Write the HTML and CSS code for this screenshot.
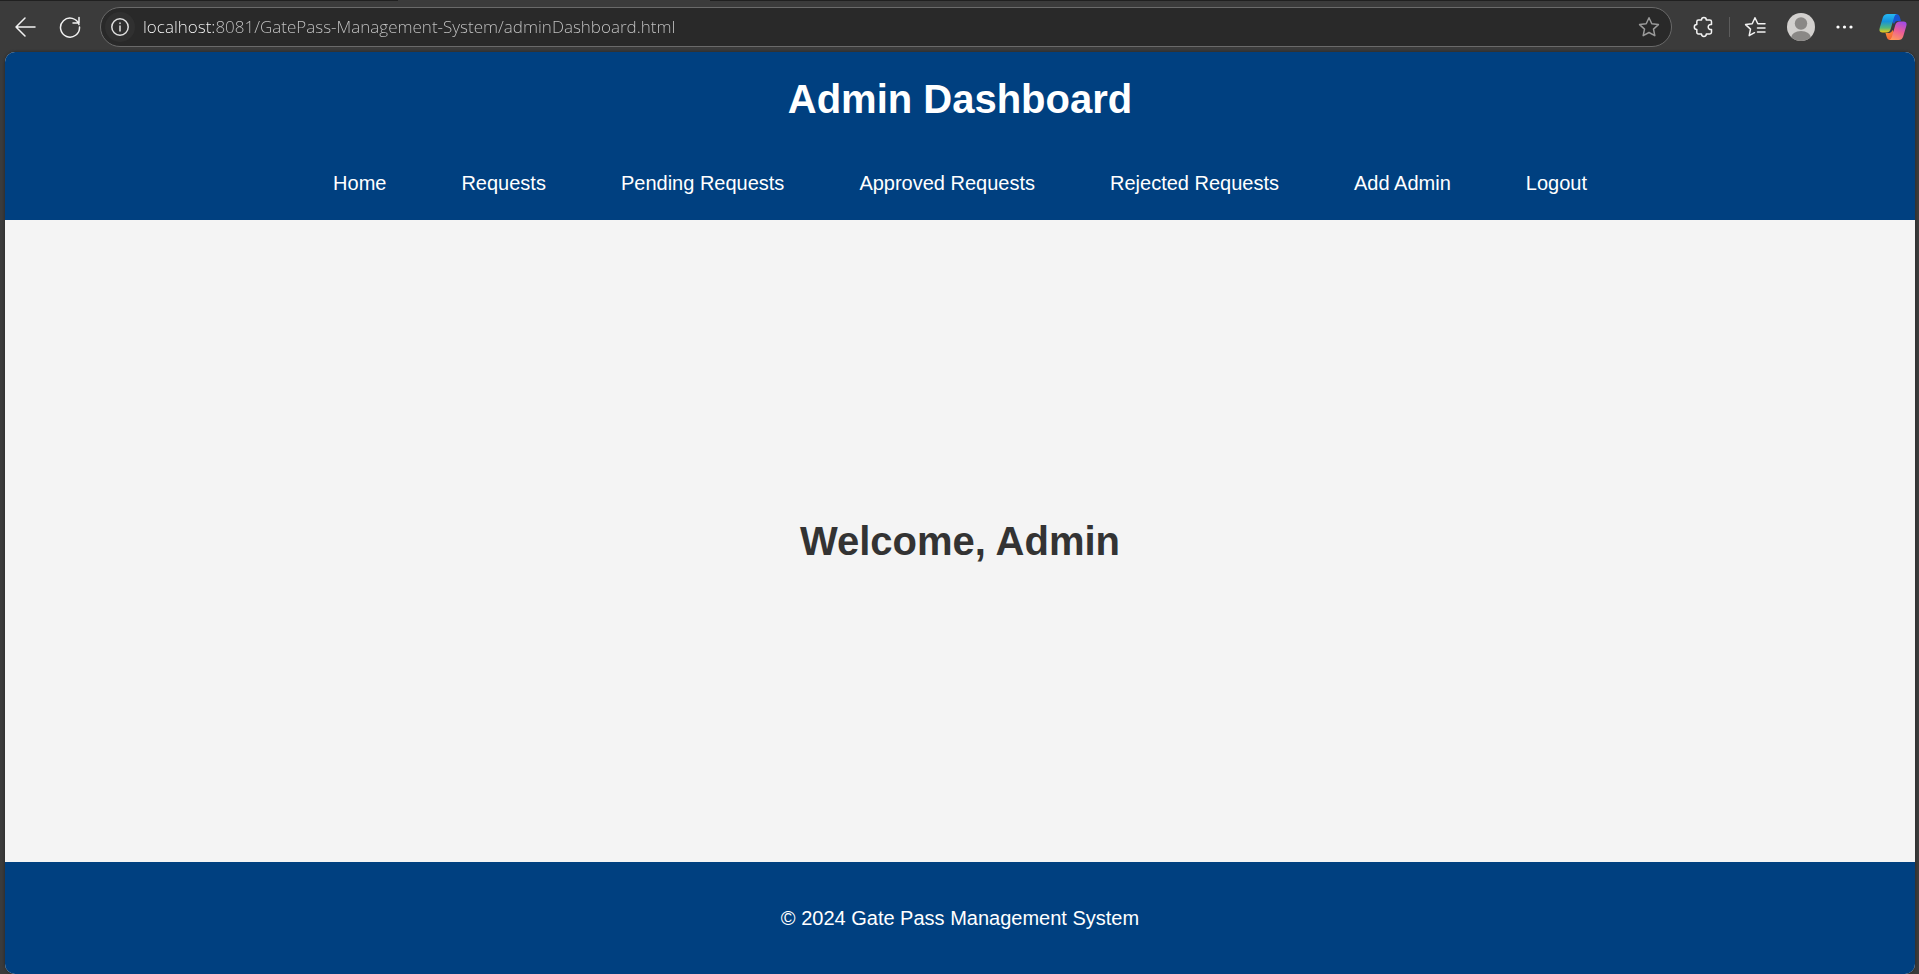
FILE: index.html
```html
<!DOCTYPE html>
<html lang="en">
<head>
<meta charset="utf-8">
<title>Admin Dashboard</title>
<link rel="stylesheet" href="styles.css">
</head>
<body class="window">
<div class="tab-strip"><span class="tab-edge tab-edge-left"></span><span class="tab-active"></span><span class="tab-edge tab-edge-right"></span></div>
<div class="toolbar">
  <button class="tool" aria-label="Back">
    <svg width="22" height="22" viewBox="0 0 22 22" class="line"><path d="M11 2 2 11l9 9M2 11h19"/></svg>
  </button>
  <button class="tool" aria-label="Refresh">
    <svg width="22" height="22" viewBox="0 0 22 22" class="line"><path d="M20 8.500A9.500 9.500 0 1 0 20.500 11M20 1.500v5.500h-6"/></svg>
  </button>
  <form class="address">
    <button type="button" class="site-info" aria-label="Site information">
      <svg width="18" height="18" viewBox="0 0 18 18" class="line info"><circle cx="9" cy="9" r="8.200"/><path d="M9 8v5M9 5v.600"/></svg>
    </button>
    <input class="url" type="text" aria-label="Address" value="localhost:8081/GatePass-Management-System/adminDashboard.html">
    <button type="button" class="star" aria-label="Add to favorites">
      <svg width="22" height="22" viewBox="0 0 22 22" class="line dim"><path d="m11 1.800 2.800 6 6.600.8-4.900 4.500 1.300 6.600L11 16.500l-5.800 3.200 1.300-6.600L1.600 8.600l6.600-.8z"/></svg>
    </button>
  </form>
  <div class="actions">
    <button class="tool" aria-label="Extensions">
      <svg width="22" height="22" viewBox="0 0 22 22" class="line"><path d="M5.500 4h3a2.400 2.400 0 0 1 4.800 0h3.500q1.700 0 1.700 1.700v2.800a2.600 2.600 0 1 0 0 5v2.800q0 1.700-1.700 1.700h-3.500a2.400 2.400 0 0 1-4.800 0h-3q-1.700 0-1.700-1.700v-2.800a2.500 2.500 0 0 1 0-5V5.700Q3.800 4 5.500 4z"/></svg>
    </button>
    <span class="divider"></span>
    <button class="tool" aria-label="Favorites">
      <svg width="22" height="22" viewBox="0 0 22 22" class="line"><path d="M21 7.800h-7.200L11 1.800l-2.800 6-6.600.8 4.900 4.500-1.300 6.600 5.300-3M13.500 12H21M13.500 16H21"/></svg>
    </button>
    <button class="tool" aria-label="Profile">
      <svg width="28" height="28" viewBox="0 0 28 28"><defs><clipPath id="face"><circle cx="14" cy="14" r="14"/></clipPath></defs><g clip-path="url(#face)"><path fill="#d2d0ce" d="M0 0h28v28H0z"/><circle cx="14" cy="10.500" r="6.200" fill="#8a8886"/><ellipse cx="14" cy="25" rx="10" ry="7" fill="#8a8886"/></g></svg>
    </button>
    <button class="tool" aria-label="Settings and more">
      <svg width="18" height="18" viewBox="0 0 18 18" fill="#fff"><circle cx="2" cy="9" r="1.600"/><circle cx="8.500" cy="9" r="1.600"/><circle cx="15" cy="9" r="1.600"/></svg>
    </button>
  </div>
  <button class="tool" aria-label="Copilot">
    <svg width="28" height="28" viewBox="0 0 28 28">
      <defs>
        <linearGradient id="cool" x1="0" y1="0" x2="0" y2="1"><stop offset="0" stop-color="#26b8f2"/><stop offset=".4" stop-color="#1591dc"/><stop offset=".75" stop-color="#53b77c"/><stop offset="1" stop-color="#f2cb13"/></linearGradient>
        <linearGradient id="warm" x1=".7" y1="0" x2=".3" y2="1"><stop offset="0" stop-color="#a34be5"/><stop offset=".5" stop-color="#ec5d96"/><stop offset="1" stop-color="#ff985b"/></linearGradient>
        <linearGradient id="fold" x1="0" y1="0" x2="1" y2="1"><stop offset="0" stop-color="#ff9b35"/><stop offset="1" stop-color="#ee4937"/></linearGradient>
      </defs>
      <path fill="#1855d1" d="M8 1h9q3 0 3.800 3l1.200 4h-4q-2 0-3 3z"/>
      <path fill="url(#fold)" d="M19 27h-8q-2.500 0-3.300-3l-1.200-4h4q2 0 3-3z"/>
      <path fill="url(#cool)" d="M8.500 1H18q-2 0-2.800 3l-3.500 12q-1 3.500-4.500 3.500H3.500Q-.5 19.500.7 15L3.800 4.500Q5 1 8.500 1z"/>
      <path fill="url(#warm)" d="M19.500 27H10q2 0 2.800-3l3.500-12q1-3.500 4.500-3.500h3.700q4 0 2.800 4.500l-3.100 10.500q-1.200 3.500-4.700 3.500z"/>
    </svg>
  </button>
</div>
<div class="page">
  <header class="header">
    <h1 class="title">Admin Dashboard</h1>
    <nav class="nav">
      <a class="nav-link" href="#">Home</a>
      <a class="nav-link" href="#">Requests</a>
      <a class="nav-link" href="#">Pending Requests</a>
      <a class="nav-link" href="#">Approved Requests</a>
      <a class="nav-link" href="#">Rejected Requests</a>
      <a class="nav-link" href="#">Add Admin</a>
      <a class="nav-link" href="#">Logout</a>
    </nav>
  </header>
  <main class="main"><h2 class="welcome">Welcome, Admin</h2></main>
  <footer class="footer"><p class="copyright">© 2024 Gate Pass Management System</p></footer>
</div>
</body>
</html>
```

FILE: styles.css
```css
* { box-sizing: border-box; }

.window {
  display: flex;
  flex-direction: column;
  min-height: 100vh;
  margin: 0;
  background: #3b3b3b;
  font-family: "Liberation Sans", Arial, sans-serif;
}

/* Browser chrome */
.tab-strip { display: flex; height: 1px; }
.tab-edge { background: #202020; }
.tab-edge-left { width: 398px; }
.tab-active { width: 312px; }
.tab-edge-right { flex: 1; }

.toolbar {
  display: flex;
  align-items: center;
  gap: 23px;
  height: 51px;
  padding: 0 12px 0 14px;
}

.tool, .site-info, .star {
  display: flex;
  flex: none;
  padding: 0;
  border: 0;
  background: none;
}

.line { fill: none; stroke: #f2f2f2; stroke-width: 1.5; stroke-linecap: round; stroke-linejoin: round; }
.dim { stroke: #9a9a9a; }
.info { stroke: #e0e0e0; }

.address {
  display: flex;
  flex: 1;
  align-items: center;
  height: 40px;
  margin: 0 -2px 0 -4px;
  padding: 0 11px 0 4px;
  border: 1px solid #6a6a6a;
  border-radius: 20px;
  background: #292929;
}

.site-info {
  align-items: center;
  justify-content: center;
  width: 30px;
  height: 30px;
  border-radius: 50%;
  background: #303030;
}

.url {
  flex: 1;
  min-width: 0;
  margin: 0 8px;
  padding: 0;
  border: 0;
  outline: 0;
  background: linear-gradient(to right, #fff 71px, #c8c8c8 71px);
  background-clip: text;
  -webkit-background-clip: text;
  -webkit-text-fill-color: transparent;
  font: 300 17px/24px "Open Sans", "Noto Sans", sans-serif;
}

.actions { display: flex; align-items: center; gap: 21px; margin-right: 2px; }
.divider { width: 1px; height: 20px; margin: 0 -7px; background: #5c5c5c; }

/* Dashboard */
.page {
  display: flex;
  flex: 1;
  flex-direction: column;
  margin: 0 4px 0 5px;
  overflow: hidden;
  border-radius: 10px;
  background: #f4f4f4;
  box-shadow: 0 0 3px #222;
}

.header {
  padding: 24px 20px 25px;
  background: #004080;
  color: #fff;
  text-align: center;
}

.title { margin: 0 0 50px; font-size: 40px; line-height: 46px; }
.nav { display: flex; justify-content: center; gap: 75px; }
.nav-link { color: #fff; font-size: 20px; line-height: 23px; text-decoration: none; }

.main { display: flex; flex: 1; align-items: center; justify-content: center; }
.welcome { margin: 0; color: #333; font-size: 40px; line-height: 46px; }

.footer { padding: 45px 20px 44px; background: #004080; color: #fff; text-align: center; }
.copyright { margin: 0; font-size: 20px; line-height: 23px; }
```
